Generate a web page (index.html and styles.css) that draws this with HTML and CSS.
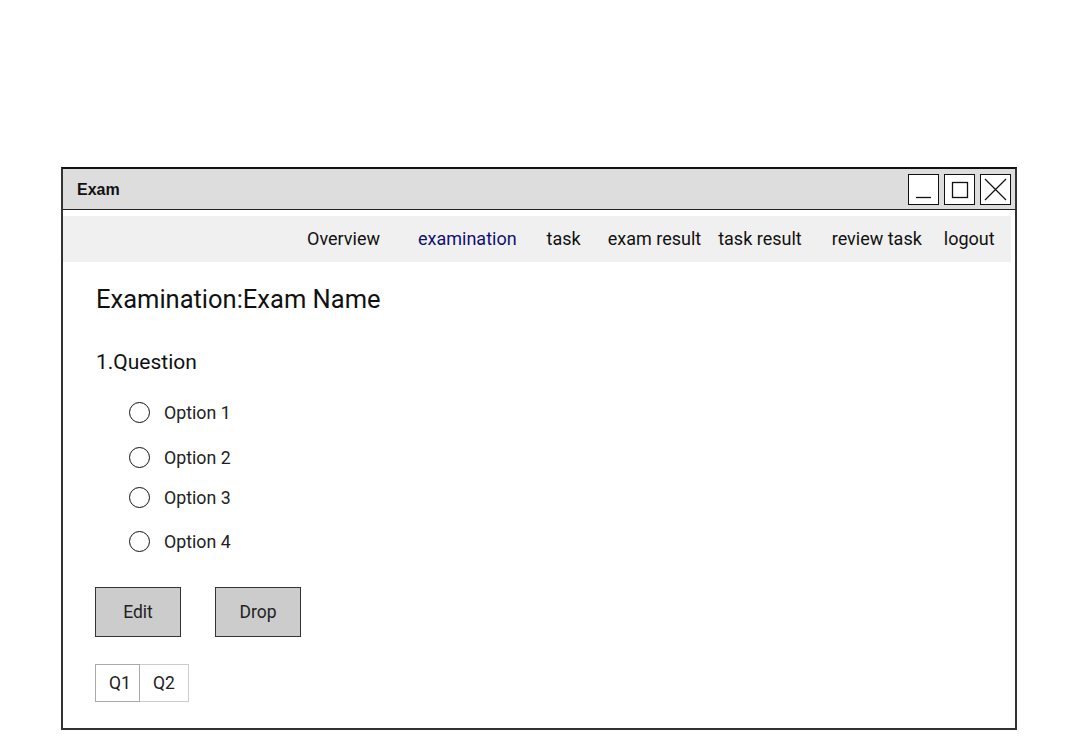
FILE: index.html
```html
<!DOCTYPE html>
<html>
<head>
<meta charset="utf-8">
<link rel="stylesheet" href="styles.css">
</head>
<body>
<div class="window">
  <div class="titlebar">
    <span class="title">Exam</span>
    <div class="controls">
      <span class="ctl"><svg width="29" height="29" viewBox="0 0 29 29"><line x1="7" y1="22.5" x2="22" y2="22.5" stroke="#111" stroke-width="1.3"/></svg></span>
      <span class="ctl"><svg width="29" height="29" viewBox="0 0 29 29"><rect x="7.5" y="7.5" width="15" height="15" fill="none" stroke="#111" stroke-width="1.3"/></svg></span>
      <span class="ctl"><svg width="29" height="29" viewBox="0 0 29 29"><path d="M4 4 L25 25 M25 4 L4 25" stroke="#111" stroke-width="1.2"/></svg></span>
    </div>
  </div>
  <nav class="nav">
    <span class="nav-item n1">Overview</span>
    <span class="nav-item n2 active">examination</span>
    <span class="nav-item n3">task</span>
    <span class="nav-item n4">exam result</span>
    <span class="nav-item n5">task result</span>
    <span class="nav-item n6">review task</span>
    <span class="nav-item n7">logout</span>
  </nav>
  <main class="content">
    <h1 class="heading">Examination:Exam Name</h1>
    <h2 class="question">1.Question</h2>
    <ul class="options">
      <li class="option o1"><span class="radio"></span>Option 1</li>
      <li class="option o2"><span class="radio"></span>Option 2</li>
      <li class="option o3"><span class="radio"></span>Option 3</li>
      <li class="option o4"><span class="radio"></span>Option 4</li>
    </ul>
    <div class="actions">
      <button class="btn">Edit</button>
      <button class="btn">Drop</button>
    </div>
    <div class="pager">
      <span class="page current">Q1</span>
      <span class="page">Q2</span>
    </div>
  </main>
</div>
</body>
</html>
```
FILE: styles.css
```css
html, body {
  margin: 0;
  padding: 0;
  background: #fff;
  font-family: Roboto, "Liberation Sans", sans-serif;
  color: #111;
}
.window {
  margin: 167px 0 0 61px;
  width: 956px;
  height: 563px;
  box-sizing: border-box;
  border: 2px solid #333;
  border-top-color: #111;
  display: flex;
  flex-direction: column;
}
.titlebar {
  height: 41px;
  background: #ddd;
  border-bottom: 1px solid #222;
  display: flex;
  align-items: center;
  justify-content: space-between;
  padding: 1px 4px 0 14px;
  box-sizing: border-box;
}
.title {
  font-family: "Liberation Sans", Arial, sans-serif;
  font-weight: 700;
  font-size: 16px;
  color: #111;
}
.controls {
  display: flex;
  gap: 5px;
  margin-top: -1px;
}
.ctl {
  width: 29px;
  height: 29px;
  border: 1px solid #111;
  background: #fff;
  display: block;
}
.ctl svg { display: block; }
.nav {
  margin: 6px 4px 0 0;
  height: 46px;
  padding-bottom: 2px;
  box-sizing: border-box;
  background: #f0f0f0;
  display: flex;
  align-items: center;
  padding-left: 244px;
  font-size: 18px;
  color: #111;
}
.nav-item { white-space: nowrap; }
.n2 { margin-left: 38px; }
.n3 { margin-left: 30px; }
.n4 { margin-left: 27px; }
.n5 { margin-left: 17px; }
.n6 { margin-left: 30px; }
.n7 { margin-left: 22px; }
.active { color: #101070; }
.content {
  padding: 21px 0 0 33px;
  display: flex;
  flex-direction: column;
}
.heading {
  margin: 0;
  font-weight: 400;
  font-size: 25.5px;
  line-height: 32px;
}
.question {
  margin: 34px 0 0 0;
  font-weight: 400;
  font-size: 21px;
  line-height: 26px;
}
.options {
  list-style: none;
  margin: 0;
  padding: 0 0 0 33px;
}
.option {
  display: flex;
  align-items: center;
  font-size: 17.8px;
  height: 24px;
  color: #222;
}
.o1 { margin-top: 25px; }
.o2 { margin-top: 21px; }
.o3 { margin-top: 16px; }
.o4 { margin-top: 20px; }
.radio {
  width: 19px;
  height: 19px;
  border: 1.5px solid #111;
  border-radius: 50%;
  margin-right: 14px;
  flex: none;
}
.actions {
  display: flex;
  gap: 34px;
  margin: 34px 0 0 -1px;
}
.btn {
  width: 86px;
  height: 50px;
  box-sizing: border-box;
  background: #ccc;
  border: 1.5px solid #333;
  font-family: Roboto, "Liberation Sans", sans-serif;
  font-size: 17.5px;
  color: #222;
  padding: 0;
}
.pager {
  display: flex;
  margin: 27px 0 0 -1px;
}
.page {
  width: 45px;
  height: 38px;
  box-sizing: border-box;
  border: 1px solid #ccc;
  display: flex;
  align-items: center;
  justify-content: center;
  font-size: 17.5px;
  color: #222;
}
.page.current {
  border-color: #aaa;
  padding-left: 5px;
}
.page + .page {
  border-left: none;
  width: 49px;
}
```
